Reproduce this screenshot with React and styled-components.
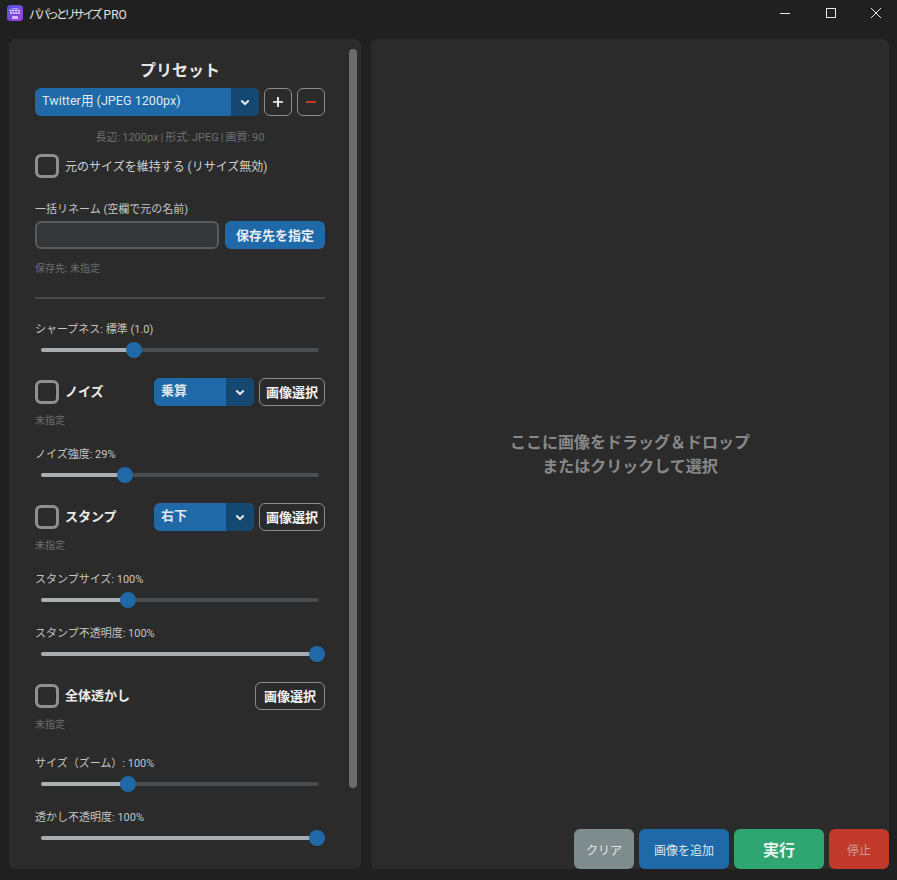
import React from "react";
import styled, { createGlobalStyle } from "styled-components";

const GlobalStyle = createGlobalStyle`
  html, body {
    margin: 0;
    height: 100%;
    background: #202020;
    overflow: hidden;
  }
  * {
    box-sizing: border-box;
  }
  body {
    font-family: Roboto, "Noto Sans CJK JP", sans-serif;
  }
`;

function AppIcon() {
  return (
    <svg width="16" height="16" viewBox="0 0 16 16">
      <defs>
        <linearGradient id="logo" x1="0" y1="0" x2="1" y2="1">
          <stop offset="0" stopColor="#4a55e0" />
          <stop offset="1" stopColor="#a63fe0" />
        </linearGradient>
      </defs>
      <rect width="16" height="16" rx="3.5" fill="url(#logo)" />
      <path d="M2.5 5.5h11M3 8h10" stroke="#f0e8ff" strokeWidth="1.3" strokeDasharray="2 0.7" />
      <path d="M5 3.6h6" stroke="#d8c8ff" strokeWidth="0.7" />
      <rect x="5" y="11" width="6" height="3" rx="0.5" fill="#e8d8ff" opacity="0.8" />
    </svg>
  );
}

function Chevron() {
  return (
    <svg width="10" height="7" viewBox="0 0 10 7">
      <path d="M1.3 1.5 5 5l3.7-3.5" fill="none" stroke="#e4e8ec" strokeWidth="2" />
    </svg>
  );
}

function Slider({ value }) {
  return (
    <SliderBox>
      <Track>
        <Fill style={{ width: `${value}%` }} />
        <Thumb style={{ left: `${value}%` }} />
      </Track>
    </SliderBox>
  );
}

function Select({ value, width, bold }) {
  return (
    <SelectBox $width={width} $bold={bold}>
      <SelectValue>{value}</SelectValue>
      <SelectArrow>
        <Chevron />
      </SelectArrow>
    </SelectBox>
  );
}

function OptionRow({ label, select, buttonWidth = 66, top }) {
  return (
    <Row $top={top}>
      <CheckBox />
      <OptionName>{label}</OptionName>
      <Spacer />
      {select && <Select value={select} width={100} bold />}
      <OutlineButton $width={buttonWidth}>画像選択</OutlineButton>
    </Row>
  );
}

export default function App() {
  return (
    <Window>
      <GlobalStyle />
      <TitleBar>
        <AppIcon />
        <TitleText>
          <TitleKana>パパっとリサイズ</TitleKana> PRO
        </TitleText>
        <WindowButtons>
          <WindowButton>
            <svg width="10" height="10" viewBox="0 0 10 10">
              <path d="M0 5.5h10" stroke="#e8e8e8" />
            </svg>
          </WindowButton>
          <WindowButton>
            <svg width="10" height="10" viewBox="0 0 10 10">
              <rect x="0.5" y="0.5" width="9" height="9" fill="none" stroke="#e8e8e8" />
            </svg>
          </WindowButton>
          <WindowButton>
            <svg width="10" height="10" viewBox="0 0 10 10">
              <path d="M0 0l10 10M10 0 0 10" stroke="#e8e8e8" />
            </svg>
          </WindowButton>
        </WindowButtons>
      </TitleBar>

      <Main>
        <SidePanel>
          <ScrollThumb />
          <PanelTitle>プリセット</PanelTitle>
          <Row $top={7}>
            <Select value="Twitter用 (JPEG 1200px)" width={224} />
            <IconButton>
              <svg width="12" height="12" viewBox="0 0 12 12">
                <path d="M6 1v10M1 6h10" stroke="#fff" strokeWidth="1.7" />
              </svg>
            </IconButton>
            <IconButton>
              <svg width="12" height="12" viewBox="0 0 12 12">
                <path d="M1 6h10" stroke="#c0392b" strokeWidth="1.9" />
              </svg>
            </IconButton>
          </Row>
          <PresetInfo>長辺: 1200px | 形式: JPEG | 画質: 90</PresetInfo>
          <Row $top={9}>
            <CheckBox />
            <KeepLabel>元のサイズを維持する (リサイズ無効)</KeepLabel>
          </Row>
          <FieldLabel $top={24}>一括リネーム (空欄で元の名前)</FieldLabel>
          <Row $top={3}>
            <RenameInput />
            <SaveButton>保存先を指定</SaveButton>
          </Row>
          <Hint $top={13}>保存先: 未指定</Hint>
          <Divider />
          <FieldLabel $top={23}>シャープネス: 標準 (1.0)</FieldLabel>
          <Slider value={33.4} />

          <OptionRow label="ノイズ" select="乗算" top={26} />
          <Hint $top={8}>未指定</Hint>
          <FieldLabel $top={19}>ノイズ強度: 29%</FieldLabel>
          <Slider value={30.2} />

          <OptionRow label="スタンプ" select="右下" top={26} />
          <Hint $top={8}>未指定</Hint>
          <FieldLabel $top={19}>スタンプサイズ: 100%</FieldLabel>
          <Slider value={31.3} />
          <FieldLabel $top={24}>スタンプ不透明度: 100%</FieldLabel>
          <Slider value={99.3} />

          <OptionRow label="全体透かし" buttonWidth={70} top={26} />
          <Hint $top={8}>未指定</Hint>
          <FieldLabel $top={24}>サイズ（ズーム）: 100%</FieldLabel>
          <Slider value={31.3} />
          <FieldLabel $top={24}>透かし不透明度: 100%</FieldLabel>
          <Slider value={99.3} />
        </SidePanel>

        <DropPanel>
          <DropText>
            ここに画像をドラッグ＆ドロップ
            <br />
            またはクリックして選択
          </DropText>
          <ActionBar>
            <ActionButton $color="#7f8c8d" $width={60}>
              クリア
            </ActionButton>
            <ActionButton $color="#1f69a8" $width={90}>
              画像を追加
            </ActionButton>
            <RunButton>実行</RunButton>
            <ActionButton $color="#c0392b" $width={60} $muted>
              停止
            </ActionButton>
          </ActionBar>
        </DropPanel>
      </Main>
    </Window>
  );
}

const Window = styled.div`
  width: 897px;
  height: 880px;
  background: #202020;
  overflow: hidden;
`;

const TitleBar = styled.header`
  height: 30px;
  padding-left: 7px;
  padding-bottom: 4px;
  display: flex;
  align-items: center;
`;

const TitleText = styled.span`
  margin-left: 6px;
  font-size: 12px;
  color: #e2e2e2;
`;

const TitleKana = styled.span`
  letter-spacing: -1.7px;
  font-feature-settings: "palt";
`;

const WindowButtons = styled.div`
  margin-left: auto;
  margin-right: -2px;
  display: flex;
`;

const WindowButton = styled.div`
  width: 45.5px;
  height: 26px;
  display: flex;
  align-items: center;
  justify-content: center;
`;

const Main = styled.main`
  height: 830px;
  margin-top: 9px;
  padding: 0 8px 0 9px;
  display: flex;
  gap: 10px;
`;

const SidePanel = styled.section`
  position: relative;
  width: 352px;
  height: 830px;
  padding: 21px 36px 0 26px;
  background: #2b2b2b;
  border-radius: 6px;
  overflow: hidden;
`;

const ScrollThumb = styled.div`
  position: absolute;
  top: 10px;
  right: 4px;
  width: 8px;
  height: 739px;
  background: #6b6b6b;
  border-radius: 4px;
`;

const PanelTitle = styled.h2`
  margin: 0;
  height: 21px;
  line-height: 21px;
  font-size: 16px;
  font-weight: 700;
  text-align: center;
  color: #e6e6e6;
`;

const Row = styled.div`
  margin-top: ${(props) => props.$top || 0}px;
  display: flex;
  align-items: center;
`;

const Spacer = styled.div`
  flex: 1;
`;

const SelectBox = styled.div`
  width: ${(props) => props.$width}px;
  height: 28px;
  display: flex;
  flex: none;
  font-size: ${(props) => (props.$bold ? 13 : 12.6)}px;
  font-weight: ${(props) => (props.$bold ? 700 : 400)};
  color: #dfe8ef;
  background: #1f69a8;
  border-radius: 6px;
  overflow: hidden;
`;

const SelectValue = styled.div`
  flex: 1;
  padding-left: 7px;
  line-height: 26px;
  white-space: nowrap;
`;

const SelectArrow = styled.div`
  width: 28px;
  display: flex;
  align-items: center;
  justify-content: center;
  background: #144870;
`;

const IconButton = styled.button`
  width: 28px;
  height: 28px;
  margin-left: 5px;
  padding: 0;
  display: flex;
  flex: none;
  align-items: center;
  justify-content: center;
  background: transparent;
  border: 1px solid #8c8c8c;
  border-radius: 6px;
`;

const PresetInfo = styled.p`
  margin: 15px 0 0;
  height: 14px;
  line-height: 14px;
  font-size: 11px;
  word-spacing: -0.7px;
  text-align: center;
  color: #6f6f6f;
`;

const CheckBox = styled.div`
  width: 24px;
  height: 24px;
  flex: none;
  border: 3px solid #8d8f91;
  border-radius: 6px;
`;

const KeepLabel = styled.span`
  margin-left: 6px;
  padding-bottom: 2px;
  font-size: 12px;
  color: #d0d0d0;
`;

const FieldLabel = styled.div`
  margin-top: ${(props) => props.$top}px;
  height: 16px;
  line-height: 16px;
  font-size: 11px;
  color: #c4c4c4;
  white-space: nowrap;
`;

const RenameInput = styled.div`
  width: 184px;
  height: 28px;
  flex: none;
  background: #343638;
  border: 2px solid #565b5e;
  border-radius: 6px;
`;

const SaveButton = styled.button`
  width: 100px;
  height: 28px;
  margin-left: 6px;
  padding: 0 0 1px;
  flex: none;
  font-family: inherit;
  font-size: 13px;
  font-weight: 700;
  color: #e6edf3;
  background: #1f69a8;
  border: 0;
  border-radius: 6px;
`;

const Hint = styled.div`
  margin-top: ${(props) => props.$top}px;
  height: 14px;
  line-height: 14px;
  font-size: 10px;
  color: #6f6f6f;
`;

const Divider = styled.hr`
  margin: 21px 0 0;
  height: 2px;
  background: #4a4a4a;
  border: 0;
`;

const SliderBox = styled.div`
  margin-top: 10px;
  padding: 0 6px;
`;

const Track = styled.div`
  position: relative;
  height: 4px;
  background: #4a4d50;
  border-radius: 2px;
`;

const Fill = styled.div`
  height: 100%;
  background: #aaadb2;
  border-radius: 2px;
`;

const Thumb = styled.div`
  position: absolute;
  top: -6px;
  width: 16px;
  height: 16px;
  margin-left: -8px;
  background: #1f69a8;
  border-radius: 50%;
`;

const OptionName = styled.span`
  margin-left: 6px;
  padding-bottom: 4px;
  font-size: 13px;
  font-weight: 700;
  color: #ececec;
`;

const OutlineButton = styled.button`
  width: ${(props) => props.$width}px;
  height: 28px;
  margin-left: 5px;
  padding: 0 0 2px;
  flex: none;
  font-family: inherit;
  font-size: 13px;
  font-weight: 700;
  color: #f2f2f2;
  background: transparent;
  border: 1px solid #8c8c8c;
  border-radius: 6px;
`;

const DropPanel = styled.section`
  position: relative;
  flex: 1;
  display: flex;
  align-items: center;
  justify-content: center;
  background: #2b2b2b;
  border-radius: 6px;
`;

const DropText = styled.p`
  margin: 2px 0 0;
  font-size: 16px;
  font-weight: 700;
  line-height: 24px;
  text-align: center;
  color: #888888;
`;

const ActionBar = styled.div`
  position: absolute;
  right: 0;
  bottom: 0;
  display: flex;
  gap: 5px;
`;

const ActionButton = styled.button`
  width: ${(props) => props.$width}px;
  height: 40px;
  padding: 0;
  font-family: inherit;
  font-size: 12px;
  color: ${(props) => (props.$muted ? "#d39a92" : "#dfe6ea")};
  background: ${(props) => props.$color};
  border: 0;
  border-radius: 6px;
`;

const RunButton = styled(ActionButton)`
  width: 90px;
  font-size: 16px;
  font-weight: 700;
  color: #e8f4ee;
  background: #2fa572;
`;
